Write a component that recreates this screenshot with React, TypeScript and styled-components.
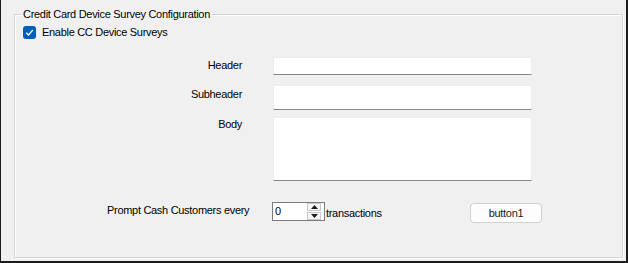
import React from 'react'
import styled, { createGlobalStyle } from 'styled-components'

const GlobalStyle = createGlobalStyle`
    html, body {
        margin: 0;
        padding: 0;
        background: #ffffff;
    }
    * {
        box-sizing: border-box;
    }
`

const Window = styled.div`
    width: 628px;
    height: 263px;
    padding: 7px 3px 2px 13px;
    background: #f0f0f0;
    border-left: 1px solid #1c1c1c;
    border-right: 2px solid #1c1c1c;
    border-bottom: 2px solid #1c1c1c;
    font-family: 'Liberation Sans', Arial, sans-serif;
    font-size: 11px;
    letter-spacing: -0.3px;
    color: #000000;
`

const GroupBox = styled.fieldset`
    margin: 0;
    padding: 0;
    min-width: 0;
    height: 251px;
    border: 1px solid #d3d3d3;
    box-shadow: inset 1px 1px 0 #ffffff, 1px 1px 0 #ffffff;
`

const GroupTitle = styled.legend`
    margin-left: 6px;
    padding: 0 2px;
    line-height: 14px;
`

const CheckRow = styled.label`
    display: flex;
    align-items: center;
    gap: 6px;
    height: 14px;
    margin: 4px 0 0 8px;
`

const CheckBox = styled.span`
    display: flex;
    align-items: center;
    justify-content: center;
    width: 13px;
    height: 13px;
    border-radius: 3px;
    background: #005fb8;
`

const FieldRow = styled.div<{ $top: number }>`
    display: flex;
    align-items: flex-start;
    gap: 31px;
    margin-top: ${(p) => p.$top}px;
`

const FieldLabel = styled.div<{ $offset: number }>`
    width: 227px;
    padding-top: ${(p) => p.$offset}px;
    line-height: 13px;
    text-align: right;
`

const TextInput = styled.div<{ $height: number }>`
    width: 259px;
    height: ${(p) => p.$height}px;
    background: #ffffff;
    border: 1px solid #ececec;
    border-bottom-color: #878787;
`

const PromptRow = styled.div`
    display: flex;
    align-items: flex-start;
    margin: 21px 0 0 92px;
`

const PromptLabel = styled.div`
    width: 165px;
    padding-top: 2px;
    line-height: 13px;
`

const SpinBox = styled.div`
    display: flex;
    align-items: center;
    width: 53px;
    height: 19px;
    padding: 0 3px 0 2px;
    background: #ffffff;
    border: 1px solid #7a7a7a;
`

const SpinValue = styled.span`
    flex: 1;
    line-height: 13px;
`

const SpinButtons = styled.div`
    display: flex;
    flex-direction: column;
    gap: 1px;
    width: 14px;
`

const SpinButton = styled.span`
    display: flex;
    align-items: center;
    justify-content: center;
    height: 8px;
    background: #f6f6f6;
    border: 1px solid #c8c8c8;
`

const Suffix = styled.div`
    width: 144px;
    margin: 5px 0 0 1px;
    line-height: 13px;
`

const PlainButton = styled.div`
    display: flex;
    align-items: center;
    justify-content: center;
    width: 72px;
    height: 20px;
    margin-top: 1px;
    background: #fdfdfd;
    border: 1px solid #d0d0d0;
    border-radius: 4px;
    color: #1a1a1a;
`

const Arrow = ({ up }: { up?: boolean }) => (
    <svg width="7" height="4" viewBox="0 0 7 4">
        <polygon points={up ? '0,4 7,4 3.5,0' : '0,0 7,0 3.5,4'} fill="#1a1a1a" />
    </svg>
)

const fields = [
    { label: 'Header', top: 18, offset: 2, height: 18 },
    { label: 'Subheader', top: 10, offset: 3, height: 25 },
    { label: 'Body', top: 7, offset: 1, height: 64 },
]

const App = () => {
    return (
        <Window>
            <GlobalStyle />
            <GroupBox>
                <GroupTitle>Credit Card Device Survey Configuration</GroupTitle>
                <CheckRow>
                    <CheckBox>
                        <svg width="9" height="9" viewBox="0 0 9 9">
                            <path d="M1.2 4.8 L3.5 7 L7.8 2" fill="none" stroke="#ffffff" strokeWidth="1.3" />
                        </svg>
                    </CheckBox>
                    Enable CC Device Surveys
                </CheckRow>
                {fields.map((f) => (
                    <FieldRow key={f.label} $top={f.top}>
                        <FieldLabel $offset={f.offset}>{f.label}</FieldLabel>
                        <TextInput $height={f.height} />
                    </FieldRow>
                ))}
                <PromptRow>
                    <PromptLabel>Prompt Cash Customers every</PromptLabel>
                    <SpinBox>
                        <SpinValue>0</SpinValue>
                        <SpinButtons>
                            <SpinButton>
                                <Arrow up />
                            </SpinButton>
                            <SpinButton>
                                <Arrow />
                            </SpinButton>
                        </SpinButtons>
                    </SpinBox>
                    <Suffix>transactions</Suffix>
                    <PlainButton>button1</PlainButton>
                </PromptRow>
            </GroupBox>
        </Window>
    )
}

export default App
